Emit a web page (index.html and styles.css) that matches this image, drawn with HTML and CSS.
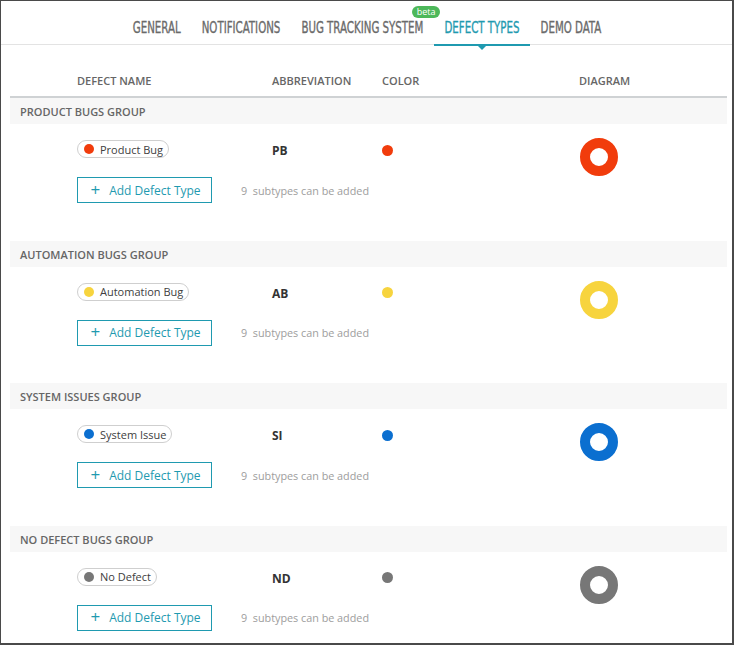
FILE: index.html
```html
<!DOCTYPE html>
<html>
<head>
<meta charset="utf-8">
<link rel="stylesheet" href="styles.css">
</head>
<body>
<div class="frame">
  <nav class="tabs">
    <a class="tab"><span class="label">GENERAL</span></a>
    <a class="tab"><span class="label">NOTIFICATIONS</span></a>
    <a class="tab"><span class="label">BUG TRACKING SYSTEM</span><span class="beta">beta</span></a>
    <a class="tab active"><span class="label">DEFECT TYPES</span></a>
    <a class="tab"><span class="label">DEMO DATA</span></a>
  </nav>
  <div class="content">
    <div class="thead">
      <div>DEFECT NAME</div>
      <div>ABBREVIATION</div>
      <div>COLOR</div>
      <div>DIAGRAM</div>
    </div>

    <section class="group">
      <div class="ghead">PRODUCT BUGS GROUP</div>
      <div class="row">
        <div class="cell-name">
          <span class="pill"><i class="dot" style="background:#f13c0c"></i>Product Bug</span>
          <div class="addline">
            <button class="add"><span class="plus">+</span>Add Defect Type</button>
            <span class="hint">9&nbsp; subtypes can be added</span>
          </div>
        </div>
        <div class="abbr">PB</div>
        <div class="color"><i class="cdot" style="background:#f13c0c"></i></div>
        <div class="diagram"><i class="donut" style="border-color:#f13c0c"></i></div>
      </div>
    </section>

    <section class="group">
      <div class="ghead">AUTOMATION BUGS GROUP</div>
      <div class="row">
        <div class="cell-name">
          <span class="pill"><i class="dot" style="background:#f7d43e"></i>Automation Bug</span>
          <div class="addline">
            <button class="add"><span class="plus">+</span>Add Defect Type</button>
            <span class="hint">9&nbsp; subtypes can be added</span>
          </div>
        </div>
        <div class="abbr">AB</div>
        <div class="color"><i class="cdot" style="background:#f7d43e"></i></div>
        <div class="diagram"><i class="donut" style="border-color:#f7d43e"></i></div>
      </div>
    </section>

    <section class="group">
      <div class="ghead">SYSTEM ISSUES GROUP</div>
      <div class="row">
        <div class="cell-name">
          <span class="pill"><i class="dot" style="background:#0b6fd0"></i>System Issue</span>
          <div class="addline">
            <button class="add"><span class="plus">+</span>Add Defect Type</button>
            <span class="hint">9&nbsp; subtypes can be added</span>
          </div>
        </div>
        <div class="abbr">SI</div>
        <div class="color"><i class="cdot" style="background:#0b6fd0"></i></div>
        <div class="diagram"><i class="donut" style="border-color:#0b6fd0"></i></div>
      </div>
    </section>

    <section class="group">
      <div class="ghead">NO DEFECT BUGS GROUP</div>
      <div class="row">
        <div class="cell-name">
          <span class="pill"><i class="dot" style="background:#777777"></i>No Defect</span>
          <div class="addline">
            <button class="add"><span class="plus">+</span>Add Defect Type</button>
            <span class="hint">9&nbsp; subtypes can be added</span>
          </div>
        </div>
        <div class="abbr">ND</div>
        <div class="color"><i class="cdot" style="background:#777777"></i></div>
        <div class="diagram"><i class="donut" style="border-color:#777777"></i></div>
      </div>
    </section>
  </div>
</div>
</body>
</html>
```
FILE: styles.css
```css
* { box-sizing: border-box; }
html, body { margin: 0; padding: 0; background: #fff; }
body { font-family: "Open Sans", "Liberation Sans", sans-serif; }

.frame {
  width: 734px;
  height: 645px;
  border: 1px solid #4a4a4a;
  border-right-width: 2px;
  border-bottom-width: 2px;
  overflow: hidden;
}

.tabs {
  height: 44px;
  border-bottom: 1px solid #e3e3e3;
  display: flex;
  justify-content: center;
  align-items: flex-end;
  gap: 1px;
  padding-left: 1px;
}
.tab {
  position: relative;
  font-family: "DejaVu Sans Condensed", "DejaVu Sans", sans-serif;
  font-stretch: condensed;
  font-size: 11.4px;
  color: #6a6a6a;
  padding: 0 10px 8px;
  height: 43px;
  display: flex;
  align-items: flex-end;
}
.label {
  display: inline-block;
  line-height: 1;
  transform: scaleY(1.44);
  transform-origin: 50% 100%;
  white-space: nowrap;
  -webkit-text-stroke: 0.25px currentColor;
}
.tab.active { color: #1f9ab0; }
.tab.active::after {
  content: "";
  position: absolute;
  left: 0; right: 0; bottom: -2px;
  height: 2px;
  background: #1f9ab0;
}
.tab.active::before {
  content: "";
  position: absolute;
  left: 50%;
  bottom: -6px;
  margin-left: -4px;
  border-left: 4px solid transparent;
  border-right: 4px solid transparent;
  border-top: 4px solid #1f9ab0;
}
.beta {
  position: absolute;
  right: -7px;
  top: 5px;
  background: #4db85a;
  color: #fff;
  font-family: "Open Sans", sans-serif;
  font-stretch: normal;
  font-weight: 400;
  font-size: 9px;
  line-height: 12px;
  padding: 0 5px;
  border-radius: 6px;
}

.content { padding: 0 5px 0 9px; }

.thead {
  display: grid;
  grid-template-columns: 195px 110px 197px 1fr;
  padding-left: 67px;
  height: 53px;
  align-items: center;
  font-size: 11px;
  font-weight: 600;
  color: #666;
  border-bottom: 2px solid #cfd2d4;
  padding-top: 19px;
}

.group { height: 142.5px; }
.ghead {
  background: #f7f7f7;
  height: 26px;
  line-height: 27px;
  padding-left: 10px;
  font-size: 11px;
  font-weight: 600;
  color: #666;
}
.row {
  display: grid;
  grid-template-columns: 195px 110px 197px 1fr;
  padding-left: 67px;
  padding-top: 16px;
}
.cell-name { display: flex; flex-direction: column; align-items: flex-start; }
.pill {
  display: flex;
  align-items: center;
  height: 18px;
  border: 1px solid #cfcfcf;
  border-radius: 9px;
  padding: 0 5px 0 6px;
  font-size: 11px;
  color: #404040;
  white-space: nowrap;
}
.dot {
  width: 10px; height: 10px; border-radius: 50%;
  display: inline-block;
  margin-right: 6px;
}
.addline {
  margin-top: 19px;
  display: flex;
  align-items: center;
  gap: 29px;
  width: 400px;
}
.add {
  width: 135px;
  height: 26px;
  border: 1px solid #1f9ab0;
  background: #fff;
  color: #1f9ab0;
  font-family: "Open Sans", sans-serif;
  font-size: 12px;
  padding: 0 0 0 2px;
  display: flex;
  align-items: center;
  justify-content: center;
}
.plus { font-size: 17px; margin-right: 9px; line-height: 1; margin-top: -2px; }
.hint { font-size: 10.8px; color: #9d9d9d; white-space: nowrap; }

.abbr {
  font-size: 12px;
  font-weight: 700;
  color: #333;
  height: 18px;
  line-height: 18px;
  margin-top: 2px;
}
.color { height: 18px; display: flex; align-items: center; margin-top: 1px; }
.cdot { width: 11px; height: 11px; border-radius: 50%; display: block; }
.donut {
  display: block;
  width: 38px; height: 38px;
  border-radius: 50%;
  border: 10.5px solid;
  margin-left: 1px;
  margin-top: -2px;
}
```
